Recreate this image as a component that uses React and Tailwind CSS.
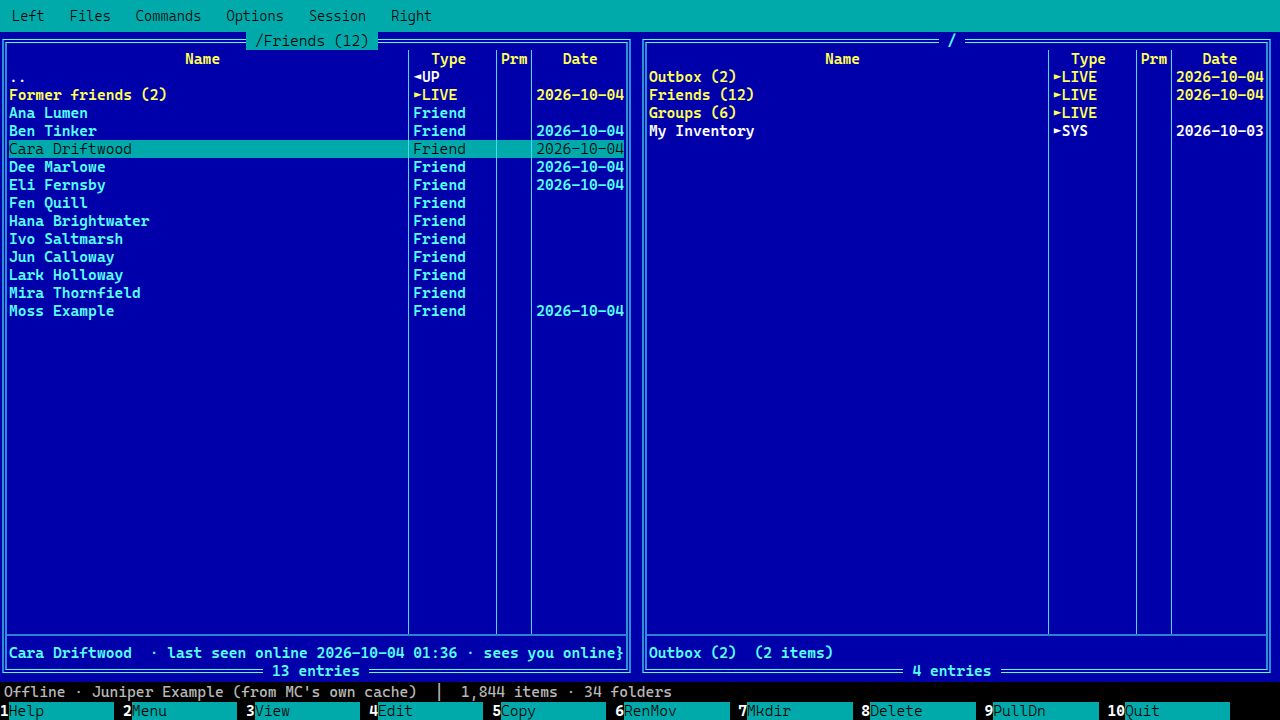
const MENUS = ["Left", "Files", "Commands", "Options", "Session", "Right"];

const KEYS = ["Help", "Menu", "View", "Edit", "Copy", "RenMov", "Mkdir", "Delete", "PullDn", "Quit"];

const FRIENDS = [
  { name: "..", type: "◄UP", date: "", tone: "text-white" },
  { name: "Former friends (2)", type: "►LIVE", date: "2026-10-04", tone: "text-[#ffff55]" },
  { name: "Ana Lumen", type: "Friend", date: "" },
  { name: "Ben Tinker", type: "Friend", date: "2026-10-04" },
  { name: "Cara Driftwood", type: "Friend", date: "2026-10-04", selected: true },
  { name: "Dee Marlowe", type: "Friend", date: "2026-10-04" },
  { name: "Eli Fernsby", type: "Friend", date: "2026-10-04" },
  { name: "Fen Quill", type: "Friend", date: "" },
  { name: "Hana Brightwater", type: "Friend", date: "" },
  { name: "Ivo Saltmarsh", type: "Friend", date: "" },
  { name: "Jun Calloway", type: "Friend", date: "" },
  { name: "Lark Holloway", type: "Friend", date: "" },
  { name: "Mira Thornfield", type: "Friend", date: "" },
  { name: "Moss Example", type: "Friend", date: "2026-10-04" },
];

const ROOT = [
  { name: "Outbox (2)", type: "►LIVE", date: "2026-10-04", tone: "text-[#ffff55]" },
  { name: "Friends (12)", type: "►LIVE", date: "2026-10-04", tone: "text-[#ffff55]" },
  { name: "Groups (6)", type: "►LIVE", date: "", tone: "text-[#ffff55]" },
  { name: "My Inventory", type: "►SYS", date: "2026-10-03", tone: "text-white" },
];

const line = "border-l border-[#45dcf5]";

function Row({ item }) {
  const tone = item.selected ? "bg-[#00aaaa] text-black font-[350]" : item.tone || "text-[#55ffff]";
  return (
    <tr className={`h-[18px] ${tone}`}>
      <td className="p-0">{item.name}</td>
      <td className={`p-0 pl-1 ${line}`}>{item.type}</td>
      <td className={`p-0 ${line}`}></td>
      <td className={`p-0 pl-1 ${line}`}>{item.date}</td>
    </tr>
  );
}

// Labels sit on character columns, so even-length ones land half a column to the right.
function FrameLabel({ edge, tone, children }) {
  return (
    <div className={`absolute inset-x-0 flex justify-center ${edge} ${children.length % 2 ? "pr-4" : "pr-2"}`}>
      <h2 className={`px-[9px] ${tone}`}>{children}</h2>
    </div>
  );
}

function Panel({ title, active, items, footer, count }) {
  return (
    <section className="relative flex pt-[7px] pb-[9px] pl-[2px] pr-[9px]">
      <div className="flex flex-1 border-x-2 border-y border-x-[#2b8fd5] border-y-[#55ffff] px-px py-[2px]">
        <div className="flex flex-1 flex-col border-x-2 border-y border-x-[#2b8fd5] border-y-[#55ffff] pt-[7px]">
          <div className="flex flex-1 pl-[2px] pr-[2px]">
            <table className="w-full table-fixed border-separate border-spacing-0 whitespace-nowrap text-left">
              <colgroup>
                <col />
                <col className="w-[88px]" />
                <col className="w-[35px]" />
                <col className="w-[93px]" />
              </colgroup>
              <thead>
                <tr className="h-[18px] text-center text-[#ffff55]">
                  <th className="p-0 pr-3 font-semibold">Name</th>
                  <th className={`p-0 pr-2 font-semibold ${line}`}>Type</th>
                  <th className={`p-0 font-semibold ${line}`}>Prm</th>
                  <th className={`p-0 pl-1 font-semibold ${line}`}>Date</th>
                </tr>
              </thead>
              <tbody>
                {items.map((item) => (
                  <Row key={item.name} item={item} />
                ))}
                <tr>
                  <td></td>
                  <td className={line}></td>
                  <td className={line}></td>
                  <td className={line}></td>
                </tr>
              </tbody>
            </table>
          </div>
          <div className="flex h-[35px] items-center whitespace-pre border-t-2 border-[#2b80d5] px-[2px] text-[#55ffff]">
            {footer}
          </div>
        </div>
      </div>
      <FrameLabel edge="top-0" tone={active ? "bg-[#00aaaa] font-[350] text-black" : "bg-[#0000aa] text-[#55ffff]"}>
        {title}
      </FrameLabel>
      <FrameLabel edge="bottom-[2px]" tone="bg-[#0000aa] text-[#55ffff]">
        {count}
      </FrameLabel>
    </section>
  );
}

export default function App() {
  return (
    <div className="flex min-h-screen flex-col bg-[#0000aa] font-['Cascadia_Mono','Liberation_Mono',monospace] text-[15px] leading-[18px]">
      <nav className="flex h-8 items-center gap-[25px] bg-[#00aaaa] px-3 text-sm font-[350] text-black">
        {MENUS.map((menu) => (
          <button key={menu}>{menu}</button>
        ))}
      </nav>
      <main className="grid flex-1 grid-cols-2 font-semibold">
        <Panel
          title="/Friends (12)"
          active
          items={FRIENDS}
          footer="Cara Driftwood  · last seen online 2026-10-04 01:36 · sees you online}"
          count="13 entries"
        />
        <Panel title="/" items={ROOT} footer="Outbox (2)  (2 items)" count="4 entries" />
      </main>
      <div className="h-5 whitespace-pre bg-black px-1 leading-5 text-[#b8b8b8]">
        Offline · Juniper Example (from MC's own cache){"  │  "}1,844 items · 34 folders
      </div>
      <footer className="flex h-[18px] gap-[1ch] bg-black">
        {KEYS.map((label, i) => (
          <button key={label} className="flex">
            <span className="font-bold text-white">{i + 1}</span>
            <span className="w-[12ch] bg-[#00aaaa] text-left font-[350] text-black">{label}</span>
          </button>
        ))}
      </footer>
    </div>
  );
}
